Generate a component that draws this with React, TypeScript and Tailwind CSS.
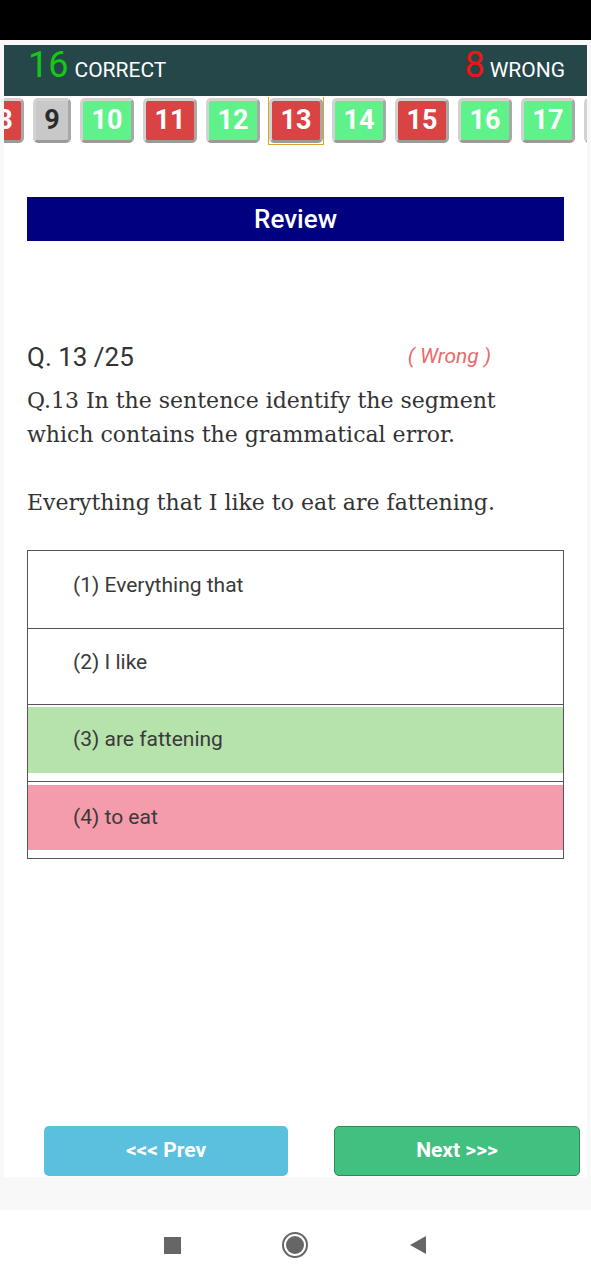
import { FC } from "react";

/**
 * Tiles of the question strip, the first one is cut by the scroll on left side
 */
const tiles = [
  { n: 8, state: "wrong" },
  { n: 9, state: "skip" },
  { n: 10, state: "right" },
  { n: 11, state: "wrong" },
  { n: 12, state: "right" },
  { n: 13, state: "wrong", current: true },
  { n: 14, state: "right" },
  { n: 15, state: "wrong" },
  { n: 16, state: "right" },
  { n: 17, state: "right" },
  { n: 18, state: "right" },
];

const options = [
  { label: "(1) Everything that", mark: "", h: "h-[77px]" },
  { label: "(2) I like", mark: "", h: "h-[76px]" },
  { label: "(3) are fattening", mark: "right", h: "h-[77px]" },
  { label: "(4) to eat", mark: "wrong", h: "h-[77px]" },
];

const Tile: FC<{ n: number; state: string; current?: boolean }> = ({
  n,
  state,
  current,
}) => {
  const bg =
    state === "right"
      ? "bg-[#5ff28b] text-white"
      : state === "wrong"
      ? "bg-[#d94343] text-white"
      : "bg-[#c8c8c8] text-[#2b2b2b]";
  return (
    <div
      className={`shrink-0 h-[47px] flex items-center justify-center ${
        current ? "outline outline-1 outline-[#d9a428]" : ""
      } ${n < 10 ? "w-[38px]" : "w-[54px]"}`}
    >
      <div
        className={`w-full h-[45px] rounded-[5px] border-[3px] border-[#d2d2d2] border-b-[#9a9a9a] border-r-[#a8a8a8] flex items-center justify-center text-[27px] font-bold leading-none ${bg}`}
      >
        {n}
      </div>
    </div>
  );
};

const App: FC = () => {
  return (
    <div className="w-full min-h-[1280px] flex flex-col bg-[#f8f8f8] font-['Roboto',sans-serif]">
      {/* status bar, empty in the shot */}
      <div className="h-[40px] bg-black shrink-0" />

      <div className="mx-[4px] mt-[5px] h-[1132px] bg-white flex flex-col">
        <div className="h-[51px] bg-[#25474a] flex items-center justify-between pl-[24px] pr-[22px] pb-[12px]">
          <div className="flex items-baseline gap-[6px]">
            <span className="text-[36px] leading-none text-[#14c814]">16</span>
            <span className="text-[21px] leading-none text-white">CORRECT</span>
          </div>
          <div className="flex items-baseline gap-[5px]">
            <span className="text-[36px] leading-none text-[#f01414]">8</span>
            <span className="text-[21px] leading-none text-white">WRONG</span>
          </div>
        </div>

        <div className="overflow-hidden h-[48px] mt-[1px]">
          <div className="flex gap-[9px] ml-[-18px]">
            {tiles.map((t) => (
              <Tile key={t.n} n={t.n} state={t.state} current={t.current} />
            ))}
          </div>
        </div>

        <div className="px-[23px]">
          <div className="mt-[52px] h-[44px] bg-[#000080] flex items-center justify-center text-white text-[26px] font-medium">
            Review
          </div>

          <div className="mt-[100px] flex items-center justify-between pr-[73px] h-[32px]">
            <span className="text-[26px] text-[#333]">Q. 13 /25</span>
            <span className="text-[21px] italic text-[#ec6a6a]">( Wrong )</span>
          </div>

          <div className="mt-[11px] font-['DejaVu_Serif',serif] text-[22px] leading-[34px] text-[#333]">
            <p>Q.13 In the sentence identify the segment which contains the grammatical error.</p>
            <p className="mt-[34px]">Everything that I like to eat are fattening.</p>
          </div>

          <div className="mt-[30px] border border-[#555]">
            {options.map((o, i) => (
              <div
                key={o.label}
                className={`${o.h} ${i > 0 ? "border-t border-[#555]" : ""}`}
              >
                <div
                  className={`flex items-center pl-[45px] text-[21px] text-[#3a3a3a] ${
                    o.mark === "right"
                      ? "h-[66px] mt-[2px] bg-[#b6e3ac]"
                      : o.mark === "wrong"
                      ? "h-[65px] mt-[3px] bg-[#f49cab]"
                      : "h-full pb-[8px]"
                  }`}
                >
                  {o.label}
                </div>
              </div>
            ))}
          </div>
        </div>

        <div className="mt-auto mb-[1px] flex justify-between pl-[40px] pr-[7px]">
          <button className="w-[244px] h-[50px] rounded-[5px] bg-[#5bc0de] text-white text-[21px] font-bold">
            {"<<< Prev"}
          </button>
          <button className="w-[246px] h-[50px] rounded-[5px] bg-[#41c07f] border border-[#2f8a55] text-white text-[21px] font-bold">
            {"Next >>>"}
          </button>
        </div>
      </div>

      {/* android nav bar */}
      <div className="mt-[33px] h-[70px] bg-white flex items-center justify-center gap-[100px]">
        <div className="w-[17px] h-[17px] bg-[#666]" />
        <svg width="28" height="28" viewBox="0 0 28 28">
          <circle cx="14" cy="14" r="12" fill="none" stroke="#666" strokeWidth="2" />
          <circle cx="14" cy="14" r="9" fill="#666" />
        </svg>
        <svg width="18" height="20" viewBox="0 0 18 20">
          <path d="M17 1 L1 10 L17 19 Z" fill="#666" />
        </svg>
      </div>
    </div>
  );
};

export default App;
